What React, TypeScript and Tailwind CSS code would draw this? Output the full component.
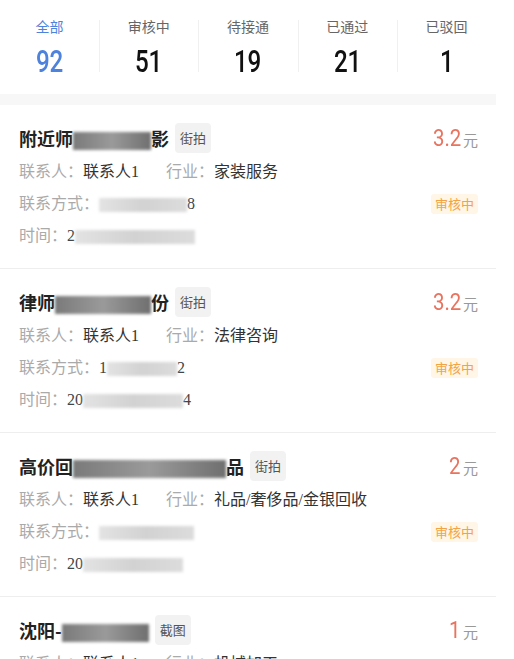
const tabs = [
  { label: '全部', count: 92, active: true },
  { label: '审核中', count: 51 },
  { label: '待接通', count: 19 },
  { label: '已通过', count: 21 },
  { label: '已驳回', count: 1 },
];

function Blur({ w, tone = 'light' }: { w: number; tone?: 'light' | 'dark' }) {
  return (
    <span
      className={
        tone === 'dark'
          ? 'inline-block h-[18px] align-middle blur-[1.5px] bg-gradient-to-r from-[#7a7a7a] via-[#9a9a9a] to-[#6f6f6f]'
          : 'inline-block h-[14px] align-middle blur-[1.5px] bg-gradient-to-r from-[#e3e3e3] via-[#d2d2d2] to-[#dcdcdc]'
      }
      style={{ width: w }}
    />
  );
}

interface Lead {
  title: React.ReactNode;
  tag: string;
  price: string;
  industry: string;
  phone: React.ReactNode;
  time: React.ReactNode;
}

const leads: Lead[] = [
  {
    title: (
      <>
        附近师<Blur w={78} tone="dark" />影
      </>
    ),
    tag: '街拍',
    price: '3.2',
    industry: '家装服务',
    phone: (
      <>
        <Blur w={88} />8
      </>
    ),
    time: (
      <>
        2<Blur w={120} />
      </>
    ),
  },
  {
    title: (
      <>
        律师<Blur w={96} tone="dark" />份
      </>
    ),
    tag: '街拍',
    price: '3.2',
    industry: '法律咨询',
    phone: (
      <>
        1<Blur w={70} />2
      </>
    ),
    time: (
      <>
        20<Blur w={100} />4
      </>
    ),
  },
  {
    title: (
      <>
        高价回<Blur w={153} tone="dark" />品
      </>
    ),
    tag: '街拍',
    price: '2',
    industry: '礼品/奢侈品/金银回收',
    phone: <Blur w={95} />,
    time: (
      <>
        20<Blur w={100} />
      </>
    ),
  },
  {
    title: (
      <>
        沈阳-<Blur w={87} tone="dark" />
      </>
    ),
    tag: '截图',
    price: '1',
    industry: '机械加工',
    phone: <Blur w={95} />,
    time: (
      <>
        20<Blur w={100} />
      </>
    ),
  },
];

const bodyFont = "font-['Liberation_Serif','Noto_Sans_CJK_SC',serif]";
const numFont = "font-['Roboto','Liberation_Sans',sans-serif]";

export default function App() {
  return (
    <div className="min-h-screen w-[514px] bg-white font-['Noto_Sans_CJK_SC',sans-serif]">
      <div className="w-[496px]">
        <div className="flex h-[94px] pt-[16px]">
          {tabs.map((t, i) => (
            <div key={t.label} className="relative flex flex-1 flex-col items-center">
              {i > 0 && <span className="absolute left-0 top-[4px] h-[52px] w-px bg-[#f0f0f0]" />}
              <span className={`text-[14px] leading-[20px] ${t.active ? 'text-[#4d83dc]' : 'text-[#666]'}`}>
                {t.label}
              </span>
              <span
                className={`${numFont} mt-[9px] inline-block scale-x-[0.78] text-[31px] font-medium leading-[34px] ${t.active ? 'text-[#4d83dc]' : 'text-[#111]'}`}
              >
                {t.count}
              </span>
            </div>
          ))}
        </div>
        <div className="h-[11px] bg-[#f7f7f7]" />
        {leads.map((l, i) => (
          <div key={i} className="border-b border-[#eeeeee] pb-[16px] pl-[19px] pr-[18px] pt-[18px]">
            <div className="flex h-[30px] items-center justify-between">
              <div className="flex items-center">
                <span className="text-[18px] font-bold leading-[30px] text-[#222]">{l.title}</span>
                <span className="ml-[6px] rounded-[4px] bg-[#f2f2f2] px-[5px] text-[13px] leading-[30px] text-[#555]">
                  {l.tag}
                </span>
              </div>
              <div className="flex items-baseline">
                <span className={`${numFont} inline-block origin-right scale-x-[0.85] text-[24px] text-[#e9735e]`}>
                  {l.price}
                </span>
                <span className="ml-[2px] text-[15px] text-[#999]">元</span>
              </div>
            </div>
            <div className={`${bodyFont} mt-[3px] text-[16px] leading-[32px]`}>
              <span className="text-[#aaa]">联系人：</span>
              <span className="text-[#333]">联系人1</span>
              <span className="ml-[27px] text-[#aaa]">行业：</span>
              <span className="text-[#333]">{l.industry}</span>
            </div>
            <div className={`${bodyFont} flex items-center justify-between text-[16px] leading-[32px]`}>
              <div>
                <span className="text-[#aaa]">联系方式：</span>
                <span className="text-[#444]">{l.phone}</span>
              </div>
              <span className="rounded-[3px] bg-[#fff6e8] px-[4px] font-['Noto_Sans_CJK_SC',sans-serif] text-[13px] leading-[20px] text-[#f2a445]">
                审核中
              </span>
            </div>
            <div className={`${bodyFont} text-[16px] leading-[32px]`}>
              <span className="text-[#aaa]">时间：</span>
              <span className="text-[#444]">{l.time}</span>
            </div>
          </div>
        ))}
      </div>
    </div>
  );
}
